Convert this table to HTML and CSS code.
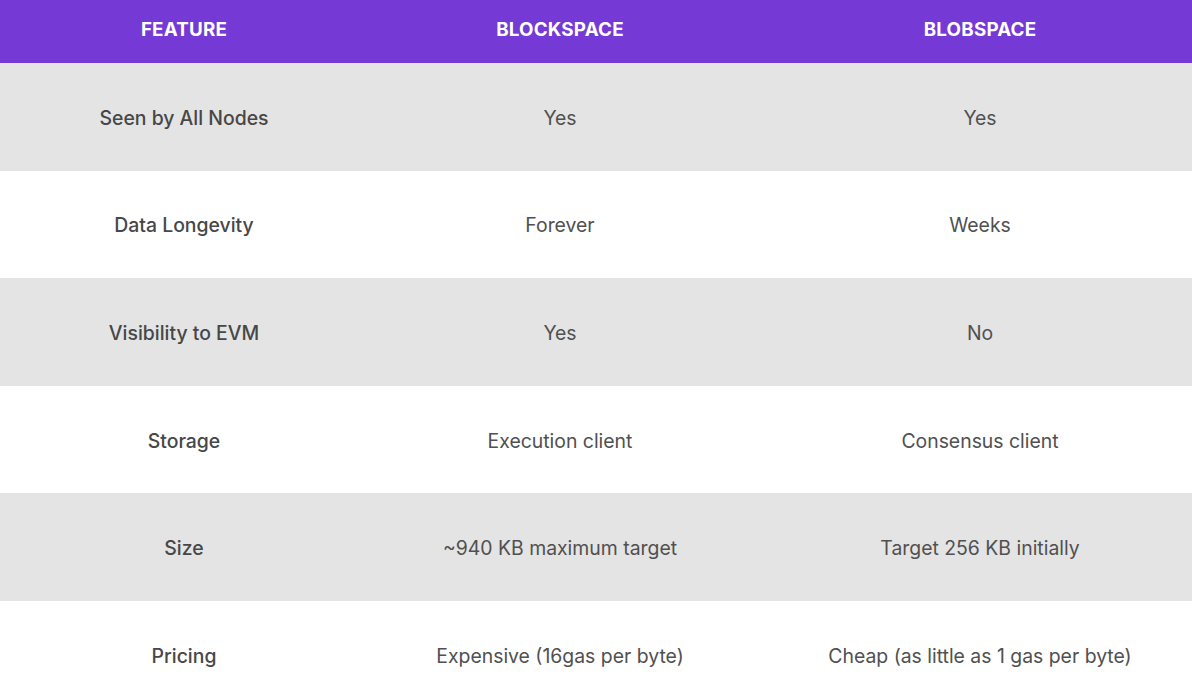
FILE: index.html
```html
<!DOCTYPE html>
<html lang="en">
<head>
<meta charset="utf-8">
<title>Blockspace vs Blobspace</title>
<link rel="stylesheet" href="styles.css">
</head>
<body>
<div class="table">
  <div class="row head">
    <div class="cell">FEATURE</div>
    <div class="cell">BLOCKSPACE</div>
    <div class="cell">BLOBSPACE</div>
  </div>
  <div class="row gray">
    <div class="cell label">Seen by All Nodes</div>
    <div class="cell">Yes</div>
    <div class="cell">Yes</div>
  </div>
  <div class="row">
    <div class="cell label">Data Longevity</div>
    <div class="cell">Forever</div>
    <div class="cell">Weeks</div>
  </div>
  <div class="row gray">
    <div class="cell label">Visibility to EVM</div>
    <div class="cell">Yes</div>
    <div class="cell">No</div>
  </div>
  <div class="row">
    <div class="cell label">Storage</div>
    <div class="cell">Execution client</div>
    <div class="cell">Consensus client</div>
  </div>
  <div class="row gray">
    <div class="cell label">Size</div>
    <div class="cell">~940 KB maximum target</div>
    <div class="cell">Target 256 KB initially</div>
  </div>
  <div class="row">
    <div class="cell label">Pricing</div>
    <div class="cell">Expensive (16gas per byte)</div>
    <div class="cell">Cheap (as little as 1 gas per byte)</div>
  </div>
</div>
</body>
</html>
```

FILE: styles.css
```css
html, body {
  margin: 0;
  padding: 0;
  background: #ffffff;
  overflow: hidden;
}
body {
  font-family: Inter, "Noto Sans", sans-serif;
  color: #505050;
  width: 1192px;
  height: 696px;
}
.table {
  width: 1208px;
  display: flex;
  flex-direction: column;
}
.row {
  display: grid;
  grid-template-columns: 368px 384px 456px;
  height: 107.6px;
  align-items: center;
  text-align: center;
  font-size: 19.4px;
}
.row .cell {
  padding-top: 2px;
}
.row.head {
  height: 63px;
  background: #7539d6;
  color: #ffffff;
  font-weight: 700;
  font-size: 18.8px;
  letter-spacing: 0.2px;
}
.row.head .cell {
  padding-top: 0;
  padding-bottom: 5px;
}
.row.gray {
  background: #e4e4e4;
}
.cell.label {
  font-weight: 500;
  color: #474747;
}
```
